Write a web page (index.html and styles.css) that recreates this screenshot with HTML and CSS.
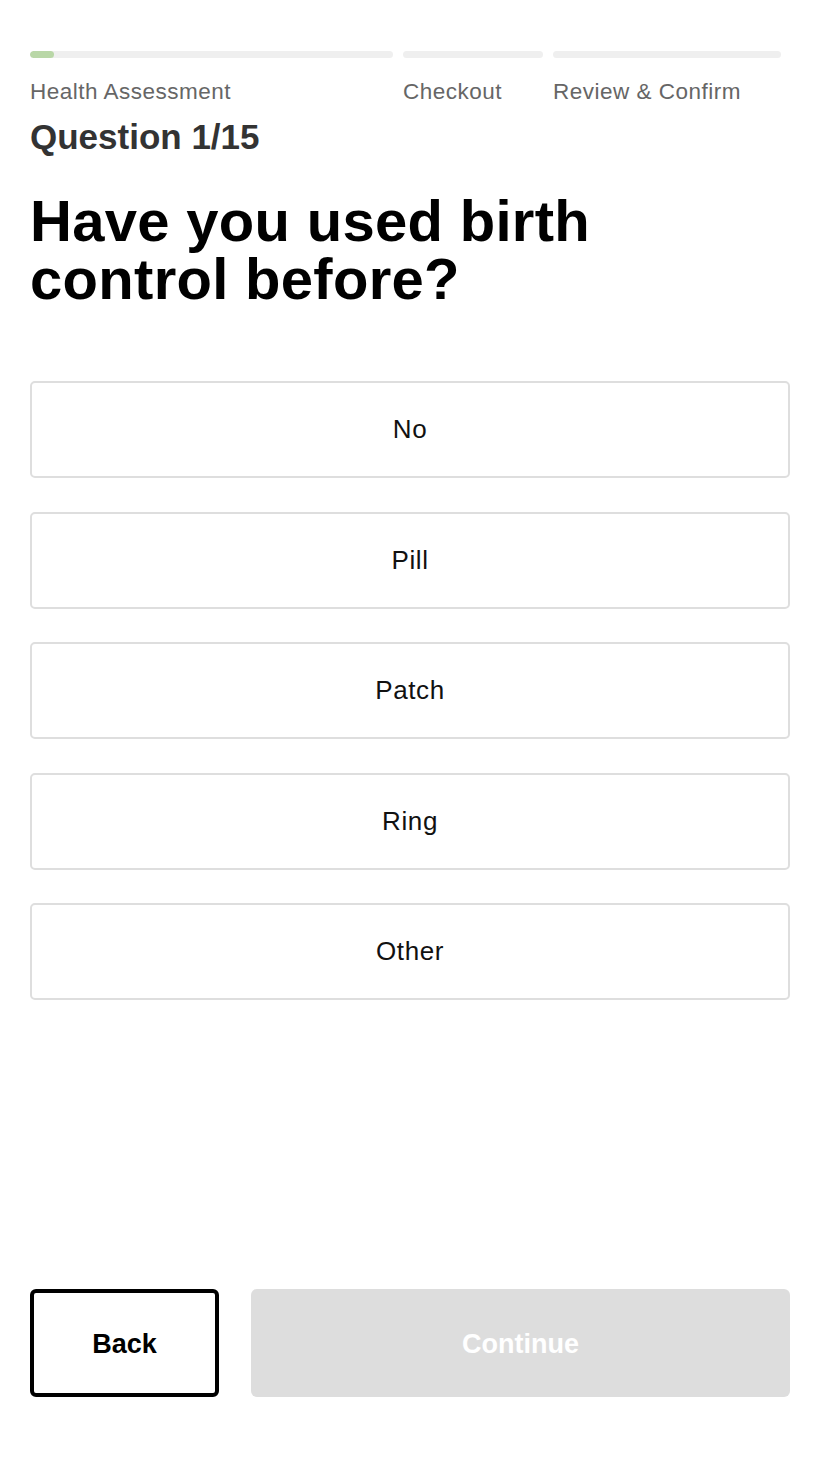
FILE: index.html
```html
<!DOCTYPE html>
<html>
<head>
<meta charset="utf-8">
<link rel="stylesheet" href="styles.css">
</head>
<body>
<div class="page">
  <div class="steps">
    <div class="step">
      <div class="bar"><div class="fill" style="width:24px"></div></div>
      <div class="label">Health Assessment</div>
    </div>
    <div class="step">
      <div class="bar"></div>
      <div class="label">Checkout</div>
    </div>
    <div class="step">
      <div class="bar"></div>
      <div class="label">Review &amp; Confirm</div>
    </div>
  </div>
  <div class="qnum">Question 1/15</div>
  <h1 class="title">Have you used birth control before?</h1>
  <div class="options">
    <div class="option">No</div>
    <div class="option">Pill</div>
    <div class="option">Patch</div>
    <div class="option">Ring</div>
    <div class="option">Other</div>
  </div>
  <div class="actions">
    <button class="btn back">Back</button>
    <button class="btn continue">Continue</button>
  </div>
</div>
</body>
</html>
```
FILE: styles.css
```css
html, body {
  margin: 0;
  padding: 0;
  background: #fff;
}
body {
  font-family: "Liberation Sans", Arial, sans-serif;
}
.page {
  padding: 51px 30px 0 30px;
  height: 1458px;
  box-sizing: border-box;
  display: flex;
  flex-direction: column;
}
.steps {
  display: grid;
  grid-template-columns: 363px 140px 228px;
  column-gap: 10px;
}
.bar {
  height: 7px;
  border-radius: 4px;
  background: #efefef;
  overflow: hidden;
}
.fill {
  height: 100%;
  background: #b9d7a7;
  border-radius: 4px;
}
.label {
  margin-top: 21px;
  font-size: 22.5px;
  line-height: 26px;
  letter-spacing: 0.5px;
  color: #666;
  white-space: nowrap;
}
.qnum {
  margin-top: 12px;
  font-size: 35px;
  font-weight: bold;
  color: #333;
  line-height: 40px;
}
.title {
  margin: 35px 0 0 0;
  font-size: 58px;
  line-height: 58px;
  font-weight: bold;
  color: #000;
  width: 640px;
  letter-spacing: 0.3px;
}
.options {
  margin-top: 73px;
  display: flex;
  flex-direction: column;
  gap: 33.5px;
}
.option {
  height: 97px;
  box-sizing: border-box;
  border: 2px solid #dedede;
  border-radius: 5px;
  display: flex;
  align-items: center;
  justify-content: center;
  font-size: 26px;
  letter-spacing: 0.6px;
  color: #111;
}
.actions {
  margin-top: auto;
  margin-bottom: 61px;
  display: flex;
  gap: 32px;
}
.btn {
  height: 108px;
  border-radius: 6px;
  font-family: "Liberation Sans", Arial, sans-serif;
  font-size: 27px;
  font-weight: bold;
  padding: 3px 0 0 0;
}
.back {
  width: 189px;
  background: #fff;
  border: 4px solid #000;
  color: #000;
}
.continue {
  flex: 1;
  background: #dddddd;
  border: none;
  color: #fff;
}
```
